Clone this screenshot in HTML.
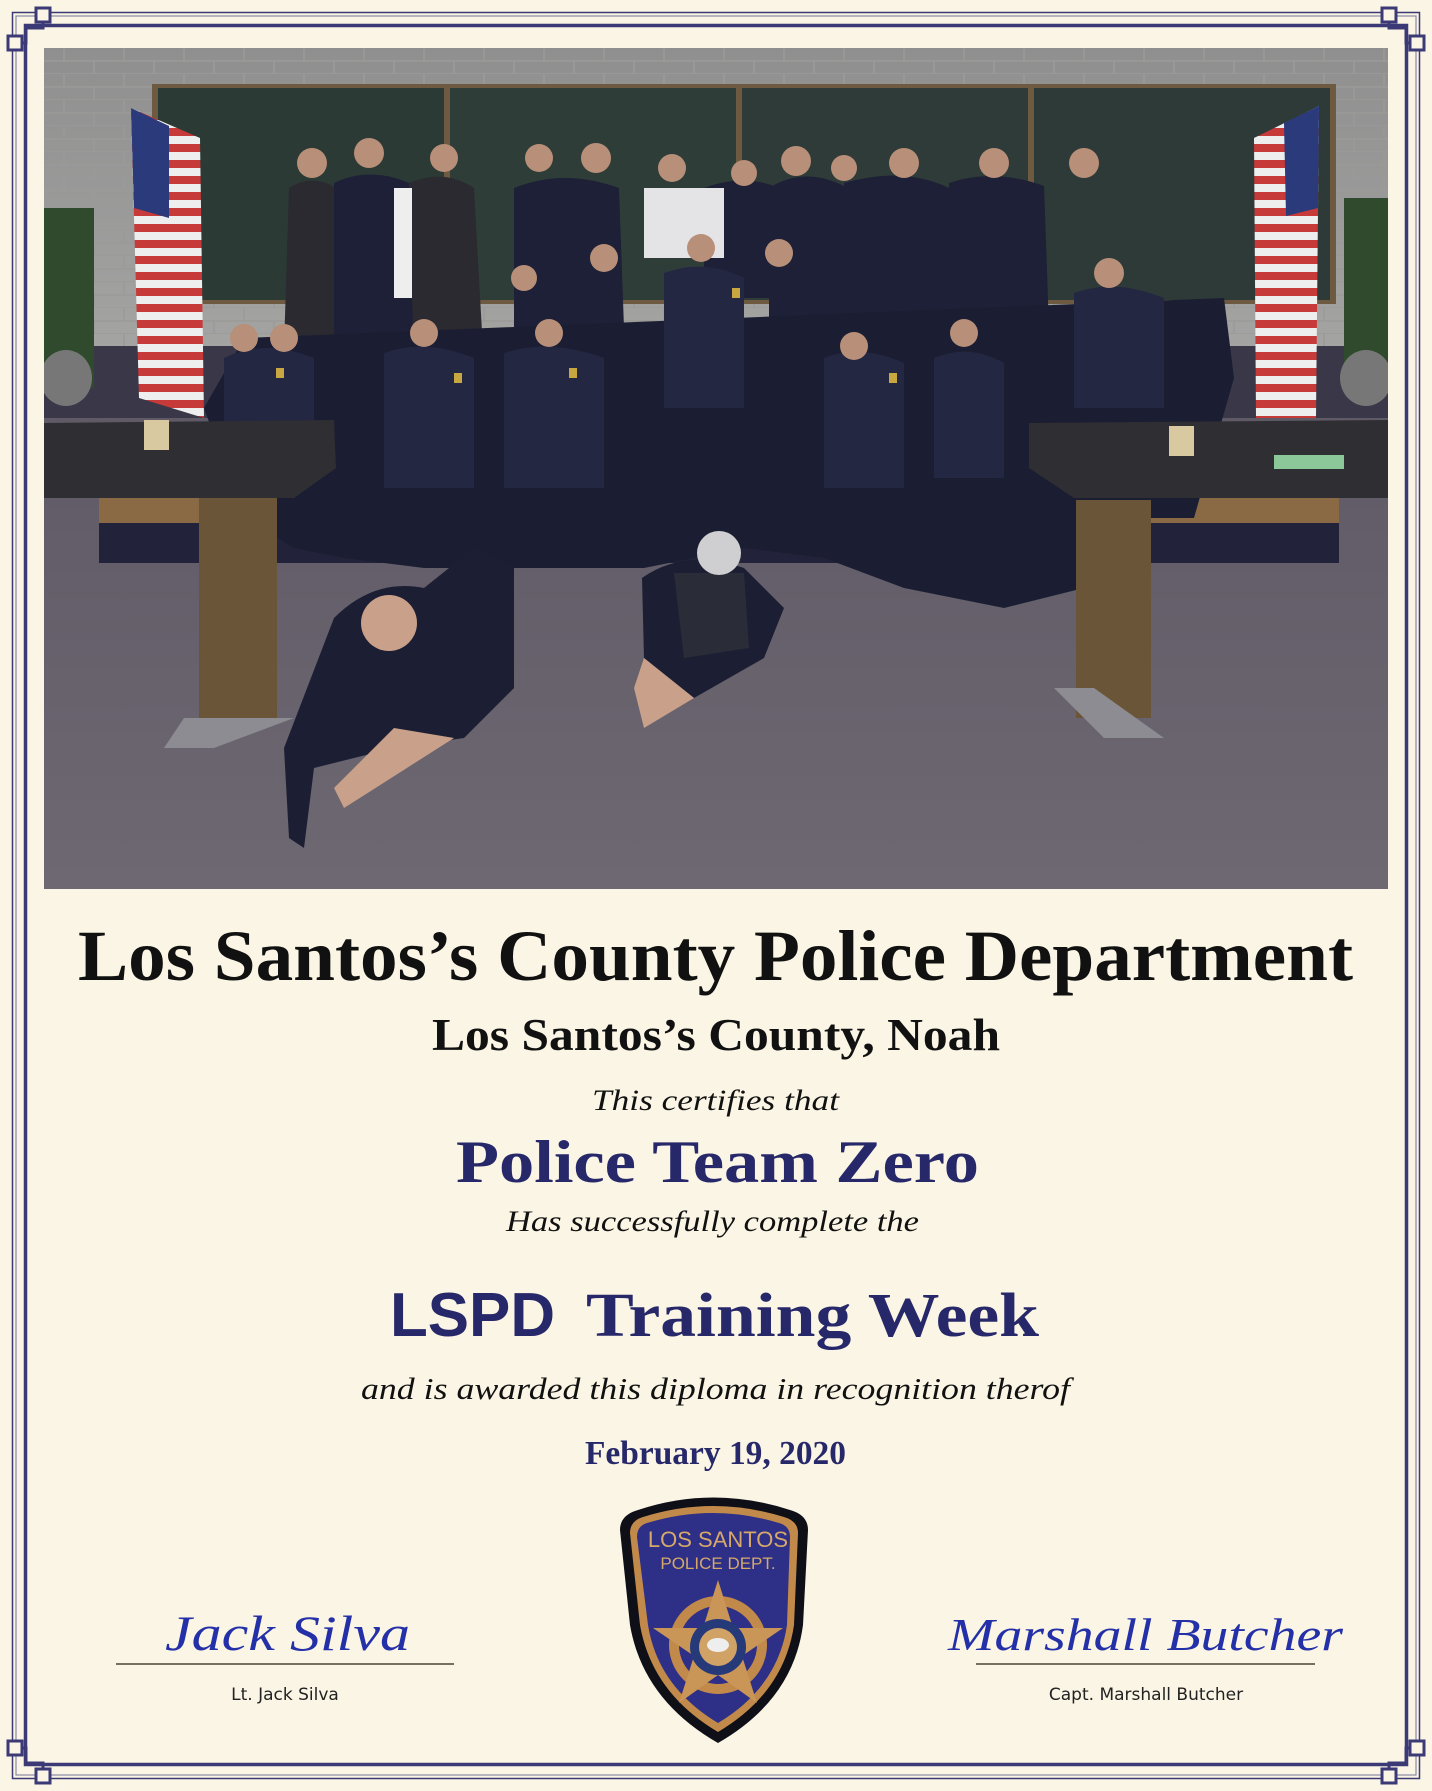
<!DOCTYPE html>
<html><head><meta charset="utf-8"><style>
html,body{margin:0;padding:0;background:#faf5e4;}
svg{display:block}
</style></head><body>
<svg width="1432" height="1791" viewBox="0 0 1432 1791" xmlns="http://www.w3.org/2000/svg">
<defs>
<linearGradient id="wall" x1="0" y1="0" x2="0" y2="1"><stop offset="0" stop-color="#8f8f8f"/><stop offset="1" stop-color="#c9c9c6"/></linearGradient>
<linearGradient id="floor" x1="0" y1="0" x2="0" y2="1"><stop offset="0" stop-color="#5f5a66"/><stop offset="1" stop-color="#6e6872"/></linearGradient>
<pattern id="brick" width="60" height="26" patternUnits="userSpaceOnUse"><path d="M0 13H60M0 26H60M20 0V13M50 13V26" stroke="#9a9a98" stroke-width="1.5"/></pattern>
<pattern id="stripes" width="10" height="16" patternUnits="userSpaceOnUse"><rect width="10" height="8" fill="#c73a3a"/><rect y="8" width="10" height="8" fill="#eee"/></pattern>
</defs>
<rect width="1432" height="1791" fill="#faf5e4"/>
<g fill="none" stroke="#3c3a76">
<rect x="12.5" y="12.5" width="1407" height="1766" stroke-width="1.5"/>
<rect x="16" y="16" width="1400" height="1759" stroke-width="1.2" stroke="#8a88a8"/>
<rect x="25.5" y="25.5" width="1381" height="1739" stroke-width="3.5"/>
</g>
<g fill="#faf5e4" stroke="#3c3a76" stroke-width="3">
<g><rect x="8" y="36" width="14" height="14"/><rect x="36" y="8" width="14" height="14"/><path d="M22 43H26V28H43V22" fill="none"/></g>
<g transform="translate(1432,0) scale(-1,1)"><rect x="8" y="36" width="14" height="14"/><rect x="36" y="8" width="14" height="14"/><path d="M22 43H26V28H43V22" fill="none"/></g>
<g transform="translate(0,1791) scale(1,-1)"><rect x="8" y="36" width="14" height="14"/><rect x="36" y="8" width="14" height="14"/><path d="M22 43H26V28H43V22" fill="none"/></g>
<g transform="translate(1432,1791) scale(-1,-1)"><rect x="8" y="36" width="14" height="14"/><rect x="36" y="8" width="14" height="14"/><path d="M22 43H26V28H43V22" fill="none"/></g>
</g>

<svg x="44" y="48" width="1344" height="841" viewBox="0 0 1344 841">
<rect width="1344" height="841" fill="url(#wall)"/>
<rect width="1344" height="370" fill="url(#brick)"/>
<rect x="108" y="36" width="1184" height="220" fill="#6e5a40"/>
<rect x="114" y="40" width="286" height="212" fill="#2c3a36"/>
<rect x="406" y="40" width="286" height="212" fill="#2f3d39"/>
<rect x="698" y="40" width="286" height="212" fill="#2e3b38"/>
<rect x="990" y="40" width="296" height="212" fill="#2d3a37"/>
<rect x="0" y="298" width="1344" height="74" fill="#3a3748"/>
<rect x="0" y="370" width="1344" height="471" fill="url(#floor)"/>
<path d="M87 60 L156 90 L160 370 L95 350 Z" fill="url(#stripes)"/>
<path d="M87 60 L125 78 L125 170 L90 160 Z" fill="#2b3a7a"/>
<path d="M1210 90 L1275 58 L1272 370 L1212 370 Z" fill="url(#stripes)"/>
<path d="M1240 75 L1275 58 L1274 160 L1242 168 Z" fill="#2b3a7a"/>
<rect x="0" y="160" width="50" height="180" fill="#2f4a2c"/>
<ellipse cx="22" cy="330" rx="26" ry="28" fill="#777"/>
<rect x="1300" y="150" width="44" height="180" fill="#2f4a2c"/>
<ellipse cx="1322" cy="330" rx="26" ry="28" fill="#777"/>
<rect x="55" y="445" width="1240" height="30" fill="#8a6a44"/>
<rect x="55" y="475" width="1240" height="40" fill="#22223a"/>
<!-- people back row -->
<g fill="#1d2036">
<path d="M245 140 Q268 125 292 140 L300 300 L240 300 Z" fill="#2a2a30"/>
<path d="M290 135 Q325 118 365 135 L372 320 L290 320 Z"/>
<path d="M365 135 Q400 120 430 140 L440 320 L370 320 Z" fill="#2a2a30"/>
<path d="M470 140 Q520 120 575 140 L580 280 L470 280 Z"/>
<path d="M660 140 Q700 125 735 140 L735 250 L660 250 Z"/>
<path d="M725 140 Q760 118 800 138 L800 270 L725 270 Z"/>
<path d="M800 135 Q860 118 905 140 L910 280 L800 280 Z"/>
<path d="M905 135 Q950 120 1000 138 L1005 280 L905 280 Z"/>
</g>
<rect x="600" y="140" width="80" height="70" fill="#e4e4e6"/>
<rect x="350" y="140" width="18" height="110" fill="#eee"/>
<path d="M160 360 L200 290 L1180 250 L1190 330 L1150 470 L1080 470 L1040 540 L960 560 L860 540 L780 510 L700 500 L600 520 L480 520 L380 520 L300 510 L250 500 L200 470 Z" fill="#1b1e32"/>
<g fill="#232742">
<path d="M180 310 Q220 290 270 310 L270 420 L180 420 Z"/>
<path d="M340 305 Q380 290 430 310 L430 440 L340 440 Z"/>
<path d="M460 305 Q505 290 560 310 L560 440 L460 440 Z"/>
<path d="M620 225 Q660 210 700 230 L700 360 L620 360 Z"/>
<path d="M780 310 Q815 295 860 315 L860 440 L780 440 Z"/>
<path d="M890 310 Q925 295 960 315 L960 430 L890 430 Z"/>
<path d="M1030 245 Q1070 230 1120 250 L1120 360 L1030 360 Z"/>
</g>
<g fill="#c8a640"><rect x="232" y="320" width="8" height="10"/><rect x="410" y="325" width="8" height="10"/><rect x="525" y="320" width="8" height="10"/><rect x="845" y="325" width="8" height="10"/><rect x="688" y="240" width="8" height="10"/></g>
<g fill="#b88f78">
<circle cx="268" cy="115" r="15"/><circle cx="325" cy="105" r="15"/><circle cx="400" cy="110" r="14"/><circle cx="495" cy="110" r="14"/><circle cx="552" cy="110" r="15"/><circle cx="628" cy="120" r="14"/><circle cx="700" cy="125" r="13"/><circle cx="752" cy="113" r="15"/><circle cx="800" cy="120" r="13"/><circle cx="860" cy="115" r="15"/><circle cx="950" cy="115" r="15"/><circle cx="1040" cy="115" r="15"/><circle cx="560" cy="210" r="14"/><circle cx="657" cy="200" r="14"/><circle cx="735" cy="205" r="14"/><circle cx="1065" cy="225" r="15"/><circle cx="200" cy="290" r="14"/><circle cx="240" cy="290" r="14"/><circle cx="380" cy="285" r="14"/><circle cx="505" cy="285" r="14"/><circle cx="810" cy="298" r="14"/><circle cx="920" cy="285" r="14"/><circle cx="480" cy="230" r="13"/>
</g>
<path d="M0 375 L290 372 L292 420 L250 450 L0 450 Z" fill="#2e2e33"/>
<rect x="155" y="450" width="78" height="222" fill="#6b5538"/>
<path d="M140 670 L250 670 L170 700 L120 700 Z" fill="#8c8c92"/>
<rect x="100" y="372" width="25" height="30" fill="#d8c9a0"/>
<path d="M985 375 L1344 372 L1344 450 L1030 450 L985 420 Z" fill="#2e2e33"/>
<rect x="1032" y="452" width="75" height="218" fill="#6b5538"/>
<path d="M1010 640 L1050 640 L1120 690 L1060 690 Z" fill="#8c8c92"/>
<rect x="1125" y="378" width="25" height="30" fill="#d8c9a0"/>
<rect x="1230" y="407" width="70" height="14" fill="#8cc79a"/>
<path d="M290 570 Q330 530 380 540 L430 500 L470 520 L470 640 L420 690 L350 700 L270 720 L260 800 L245 790 L240 700 Z" fill="#1c1f33"/>
<circle cx="345" cy="575" r="28" fill="#c9a08a"/>
<path d="M350 680 L410 690 L300 760 L290 740 Z" fill="#c9a08a"/>
<path d="M598 530 Q640 500 700 520 L740 560 L720 610 L650 650 L600 610 Z" fill="#1c1f33"/>
<path d="M630 525 L700 525 L705 600 L640 610 Z" fill="#2a2c38"/>
<circle cx="675" cy="505" r="22" fill="#cfcfd2"/>
<path d="M600 610 L650 650 L600 680 L590 640 Z" fill="#c9a08a"/>
</svg>

<g font-family="'Liberation Serif',serif">
<text x="78" y="980" font-size="72" font-weight="bold" fill="#111" textLength="1275" lengthAdjust="spacingAndGlyphs">Los Santos’s County Police Department</text>
<text x="432" y="1050" font-size="46" font-weight="bold" fill="#111" textLength="568" lengthAdjust="spacingAndGlyphs">Los Santos’s County, Noah</text>
<text x="592" y="1110" font-size="30" font-style="italic" fill="#111" textLength="247" lengthAdjust="spacingAndGlyphs">This certifies that</text>
<text x="456" y="1182" font-size="60" font-weight="bold" fill="#27286a" textLength="523" lengthAdjust="spacingAndGlyphs">Police Team Zero</text>
<text x="506" y="1231" font-size="30" font-style="italic" fill="#111" textLength="413" lengthAdjust="spacingAndGlyphs">Has successfully complete the</text>
<text x="390" y="1336" font-size="62" font-weight="bold" fill="#27286a" font-family="'Liberation Sans',sans-serif" textLength="165" lengthAdjust="spacingAndGlyphs">LSPD</text>
<text x="586" y="1336" font-size="62" font-weight="bold" fill="#27286a" textLength="453" lengthAdjust="spacingAndGlyphs">Training Week</text>
<text x="361" y="1399" font-size="31" font-style="italic" fill="#111" textLength="709" lengthAdjust="spacingAndGlyphs">and is awarded this diploma in recognition therof</text>
<text x="585" y="1464" font-size="34" font-weight="bold" fill="#27286a" textLength="261" lengthAdjust="spacingAndGlyphs">February 19, 2020</text>
</g>

<line x1="116" y1="1664" x2="454" y2="1664" stroke="#4a4536" stroke-width="1.5"/>
<text x="165" y="1650" font-family="'Liberation Serif',serif" font-style="italic" font-size="50" fill="#2430a8" textLength="245" lengthAdjust="spacingAndGlyphs">Jack Silva</text>
<text x="285" y="1700" text-anchor="middle" font-family="'DejaVu Sans',sans-serif" font-size="17" fill="#222">Lt. Jack Silva</text>
<line x1="976" y1="1664" x2="1315" y2="1664" stroke="#4a4536" stroke-width="1.5"/>
<text x="948" y="1650" font-family="'Liberation Serif',serif" font-style="italic" font-size="46" fill="#2430a8" textLength="395" lengthAdjust="spacingAndGlyphs">Marshall Butcher</text>
<text x="1146" y="1700" text-anchor="middle" font-family="'DejaVu Sans',sans-serif" font-size="17" fill="#222">Capt. Marshall Butcher</text>

<g transform="translate(618,1495)">
<path d="M20 15 Q95 -10 172 15 Q190 20 190 35 L185 130 Q175 205 100 248 Q25 205 12 130 L2 35 Q2 20 20 15 Z" fill="#0f0f18"/>
<path d="M25 22 Q95 0 166 22 Q180 26 180 38 L176 130 Q166 198 100 237 Q34 198 22 130 L12 38 Q12 26 25 22 Z" fill="#c28a4a"/>
<path d="M29 28 Q95 8 161 28 Q172 31 172 42 L169 130 Q160 192 100 228 Q40 192 30 130 L19 42 Q19 31 29 28 Z" fill="#2e2f86"/>
<text x="100" y="52" text-anchor="middle" font-family="'Liberation Sans',sans-serif" font-size="22" fill="#d6a86a">LOS SANTOS</text>
<text x="100" y="74" text-anchor="middle" font-family="'Liberation Sans',sans-serif" font-size="17" fill="#d6a86a">POLICE DEPT.</text>
<circle cx="100" cy="150" r="44" fill="none" stroke="#c28a4a" stroke-width="10"/>
<path d="M100 85 L115 133 L165 133 L124 161 L139 208 L100 180 L61 208 L76 161 L35 133 L85 133 Z" fill="#c99658"/>
<circle cx="100" cy="152" r="28" fill="#263a7a"/>
<circle cx="100" cy="152" r="19" fill="#d0a266"/>
<ellipse cx="100" cy="150" rx="11" ry="7" fill="#eee"/>
</g>
</svg>
</body></html>
